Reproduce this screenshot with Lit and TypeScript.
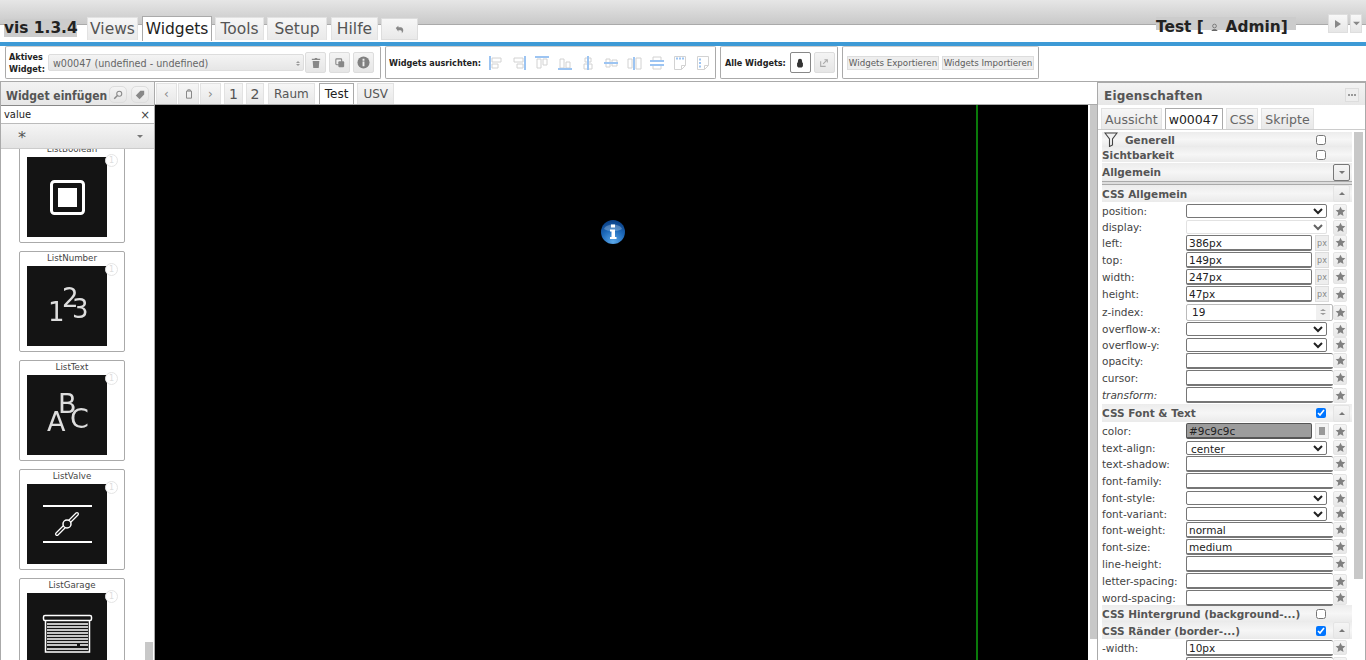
import { LitElement, css, html, svg } from 'lit'
import { customElement } from 'lit/decorators.js'

const star = html`<svg viewBox="0 0 12 12" width="11" height="11"><path fill="#808080" d="M6 .8l1.600 3.400 3.700.4-2.800 2.500.8 3.700L6 9l-3.300 1.800.8-3.700L.7 4.600l3.700-.4z"/></svg>`

type Row = { label?: string, kind: string, h: number, value?: string, checked?: boolean, arrow?: string, italic?: boolean }

const rows: Row[] = [
  { label: 'position:', kind: 'select', h: 18 },
  { label: 'display:', kind: 'disabled', h: 14 },
  { label: 'left:', kind: 'px', value: '386px', h: 17 },
  { label: 'top:', kind: 'px', value: '149px', h: 17 },
  { label: 'width:', kind: 'px', value: '247px', h: 17 },
  { label: 'height:', kind: 'px', value: '47px', h: 18 },
  { label: 'z-index:', kind: 'spin', value: '19', h: 18 },
  { label: 'overflow-x:', kind: 'select', h: 16 },
  { label: 'overflow-y:', kind: 'select', h: 15 },
  { label: 'opacity:', kind: 'input', h: 17 },
  { label: 'cursor:', kind: 'input', h: 17 },
  { label: 'transform:', kind: 'input', h: 18, italic: true },
  { label: 'CSS Font & Text', kind: 'head', h: 18, checked: true, arrow: 'up' },
  { label: 'color:', kind: 'color', value: '#9c9c9c', h: 18 },
  { label: 'text-align:', kind: 'select', value: 'center', h: 15 },
  { label: 'text-shadow:', kind: 'input', h: 17 },
  { label: 'font-family:', kind: 'input', h: 18 },
  { label: 'font-style:', kind: 'select', h: 16 },
  { label: 'font-variant:', kind: 'select', h: 15 },
  { label: 'font-weight:', kind: 'input', value: 'normal', h: 17 },
  { label: 'font-size:', kind: 'input', value: 'medium', h: 17 },
  { label: 'line-height:', kind: 'input', h: 17 },
  { label: 'letter-spacing:', kind: 'input', h: 18 },
  { label: 'word-spacing:', kind: 'input', h: 15 },
  { label: 'CSS Hintergrund (background-...)', kind: 'head', h: 17, checked: false },
  { label: 'CSS Ränder (border-...)', kind: 'head', h: 17, checked: true, arrow: 'up' },
  { label: '-width:', kind: 'input', value: '10px', h: 17 },
  { label: '', kind: 'input', h: 17 },
]

const note = 'M2.500 1.500h11v9l-4 4h-7zM13.500 10.500h-4v4'

const alignIcons = [
  ['M2 1v14', 'M4 3h9v4H4zM4 9h6v4H4z'],
  ['M14 1v14', 'M3 3h9v4H3zM6 9h6v4H6z'],
  ['M1 2h14', 'M3 4h4v9H3zM9 4h4v6H9z'],
  ['M1 14h14', 'M3 4h4v9H3zM9 7h4v6H9z'],
  ['M8 1v14', 'M5 3h6v4H5zM4 9h8v5H4z'],
  ['M1 8h14', 'M3 4h4v8H3zM9 5h5v6H9z'],
  ['M8 2v13', 'M2 4h4v9H2zM10 3h5v11h-5z'],
  ['M1 6h14M1 10h14', 'M4 2h8v4H4zM4 10h8v4H4z'],
  ['M4 3.500h2M7 3.500h2M10 3.500h2', note],
  ['M5 3.500v2M5 7v2M5 10.500v2', note],
]

const cards = [
  { name: 'ListBoolean', art: svg`<rect x="24.500" y="24.500" width="32" height="32" rx="3" fill="none" stroke="#fff" stroke-width="3"/><rect x="31" y="31" width="19" height="19" fill="#fff"/>` },
  { name: 'ListNumber', art: svg`<g fill="#ddd" font-family="DejaVu Sans" font-size="26"><text x="21" y="55">1</text><text x="35" y="41">2</text><text x="45" y="52">3</text></g>` },
  { name: 'ListText', art: svg`<g fill="#ddd" font-family="DejaVu Sans" font-size="27"><text x="20" y="56">A</text><text x="31" y="38">B</text><text x="43" y="53">C</text></g>` },
  { name: 'ListValve', art: svg`<path stroke="#fff" stroke-width="2" d="M16 22h49M16 58h49"/><path d="M30 50l7-7M43 37l7-7" stroke="#fff" stroke-width="4" stroke-linecap="round"/><path d="M30 50l7-7M43 37l7-7" stroke="#141414" stroke-width="1.500" stroke-linecap="round"/><circle cx="40" cy="40" r="4" fill="#141414" stroke="#fff" stroke-width="1.500"/>` },
  { name: 'ListGarage', art: svg`<rect x="16.500" y="22.500" width="48" height="5" rx="1.500" fill="none" stroke="#fff" stroke-width="1.500"/><path fill="none" stroke="#fff" stroke-width="1.500" d="M18.500 27v32h44V27"/><path stroke="#fff" stroke-width="1.400" d="M20 31h41M20 34h41M20 37h41M20 40h41M20 43h41M20 46h41M20 49h41M20 56h41M20 52h30M53 52h8"/>` },
]

@customElement('app-root')
export class AppRoot extends LitElement {

  renderField(row: Row) {
    switch (row.kind) {
      case 'select':
        return html`<select class="sel"><option>${row.value ?? ''}</option></select>`
      case 'disabled':
        return html`<select class="sel" disabled><option></option></select>`
      case 'px':
        return html`<input class="inp short" .value=${row.value ?? ''}><span class="unit">px</span>`
      case 'spin':
        return html`<div class="spin"><span>${row.value}</span><i class="arrows"><b class="tri up"></b><b class="tri down"></b></i></div>`
      case 'color':
        return html`<input class="inp short swatch" .value=${row.value ?? ''}><span class="unit pick"><i></i></span>`
      default:
        return html`<input class="inp" .value=${row.value ?? ''}>`
    }
  }

  renderRow(row: Row) {
    if (row.kind === 'head') {
      return html`
        <div class="row head" style="height:${row.h}px">
          <span class="head-label">${row.label}</span>
          <input type="checkbox" class="check" .checked=${!!row.checked}>
          ${row.arrow ? html`<span class="star big"><b class="tri up"></b></span>` : html`<span class="star big none"></span>`}
        </div>`
    }
    return html`
      <div class="row" style="height:${row.h}px">
        <span class="label ${row.italic ? 'italic' : ''}">${row.label}</span>
        <div class="field">${this.renderField(row)}</div>
        <span class="star">${star}</span>
      </div>`
  }

  render() {
    return html`
      <header class="top">
        <span class="brand">vis 1.3.4</span>
        <nav class="menu">
          <a class="tab">Views</a>
          <a class="tab active">Widgets</a>
          <a class="tab">Tools</a>
          <a class="tab">Setup</a>
          <a class="tab">Hilfe</a>
          <a class="tab undo">
            <svg viewBox="0 0 12 12" width="9" height="9"><path d="M1 4l3.500-3v2h3c2.500 0 3.500 2 3.500 4s-1 3-2 4c.5-2 0-4-2-4H4.500v2z" fill="#888"/></svg>
          </a>
        </nav>
        <div class="who">
          <span class="who-text">Test [
            <svg viewBox="0 0 12 12" width="9" height="9"><circle cx="6" cy="4" r="2.500" fill="none" stroke="#666"/><path d="M2 10.500c0-3 8-3 8 0z" fill="#666"/></svg>
            Admin]</span>
        </div>
        <div class="run">
          <span class="run-btn play"><svg viewBox="0 0 8 8" width="8" height="8"><path fill="#888" d="M1 0l6 4-6 4z"/></svg></span>
          <span class="run-btn more"><svg viewBox="0 0 8 8" width="7" height="7"><path fill="#888" d="M0 2h8L4 6z"/></svg></span>
        </div>
      </header>
      <div class="rule"></div>

      <section class="tools">
        <div class="group g1">
          <span class="small-label active-label">Aktives<br>Widget:</span>
          <div class="widget-sel">w00047 (undefined - undefined)<i class="updown"><b class="tri up mini"></b><b class="tri down mini"></b></i></div>
          <span class="tool-btn">
            <svg viewBox="0 0 12 12" width="10" height="10"><path fill="#888" d="M4.500 0h3v1H11v1.500H1V1h3.500zM2 3.500h8L9.300 12H2.700z"/></svg>
          </span>
          <span class="tool-btn">
            <svg viewBox="0 0 12 12" width="10" height="10"><rect x="1" y="1" width="7" height="7" rx="1" fill="none" stroke="#888" stroke-width="1.300"/><rect x="4" y="4" width="7" height="7" rx="1" fill="#888"/></svg>
          </span>
          <span class="tool-btn">
            <svg viewBox="0 0 14 14" width="13" height="13"><circle cx="7" cy="7" r="6.500" fill="#808080"/><path fill="#eee" d="M6 3h2v2H6zM6 6h2v5H6z"/></svg>
          </span>
        </div>

        <div class="group g2">
          <span class="small-label align-label">Widgets ausrichten:</span>
          <div class="aligns">
            ${alignIcons.map(([blue, grey]) => html`
              <svg viewBox="0 0 16 16" width="16" height="16" fill="none">
                <path d=${grey} stroke="#d2d2d2"/>
                <path d=${blue} stroke="#9cc4f2" stroke-width="2"/>
              </svg>`)}
          </div>
        </div>

        <div class="group g3">
          <span class="small-label">Alle Widgets:</span>
          <span class="tool-btn lock">
            <svg viewBox="0 0 12 12" width="10" height="10"><path fill="#333" d="M3.500 5V3.500a2.500 2.500 0 0 1 5 0V5l1 1v4l-1.500 1.500H4L2.500 10V6z"/></svg>
          </span>
          <span class="tool-btn">
            <svg viewBox="0 0 12 12" width="10" height="10"><path fill="none" stroke="#aaa" stroke-width="1.300" d="M2 4v6h6M5 7l5-5M6.500 2H10v3.500"/></svg>
          </span>
        </div>

        <div class="group g4">
          <span class="text-btn">Widgets Exportieren</span>
          <span class="text-btn">Widgets Importieren</span>
        </div>
      </section>

      <main class="body">
        <aside class="left">
          <div class="left-head">
            <span class="left-title">Widget einfügen</span>
            <span class="round-btn">
              <svg viewBox="0 0 12 12" width="10" height="10"><circle cx="7.500" cy="4.500" r="3" fill="none" stroke="#888" stroke-width="1.300"/><path stroke="#888" stroke-width="1.800" d="M5 7l-3.500 3.500"/></svg>
            </span>
            <span class="round-btn">
              <svg viewBox="0 0 12 12" width="10" height="10"><path fill="#888" d="M6.500 1H11v4.500L5.500 11 1 6.500z"/></svg>
            </span>
          </div>
          <div class="filter"><span>value</span><span class="clear">×</span></div>
          <div class="set"><span class="set-star">*</span><b class="tri down"></b></div>
          <div class="list">
            <div class="cards">
              ${cards.map((c) => html`
                <div class="card">
                  <div class="card-name">${c.name}</div>
                  <svg class="art" viewBox="0 0 80 80" width="80" height="80">${c.art}</svg>
                  <span class="badge">1</span>
                </div>`)}
            </div>
            <div class="list-thumb"></div>
          </div>
        </aside>

        <section class="center">
          <nav class="views">
            <span class="view nav"><b class="chev">‹</b></span>
            <span class="view nav">
              <svg viewBox="0 0 12 12" width="10" height="10"><path fill="none" stroke="#888" stroke-width="1.200" d="M3 2.500h6V11H3zM4.500 2.500V1h3v1.500"/></svg>
            </span>
            <span class="view nav"><b class="chev">›</b></span>
            <span class="view n">1</span>
            <span class="view n">2</span>
            <span class="view raum">Raum</span>
            <span class="view active">Test</span>
            <span class="view">USV</span>
          </nav>
          <div class="stage-wrap">
            <div class="stage">
              <div class="green"></div>
              <svg class="info" viewBox="0 0 24 24" width="24" height="24">
                <defs>
                  <radialGradient id="ball" cx="50%" cy="90%" r="85%">
                    <stop offset="0" stop-color="#5ba8ea"/>
                    <stop offset=".6" stop-color="#1c68b8"/>
                    <stop offset="1" stop-color="#0c4288"/>
                  </radialGradient>
                </defs>
                <circle cx="12" cy="12" r="12" fill="url(#ball)"/>
                <path d="M3 9c2-6 16-6 18 0-5 3-13 3-18 0z" fill="#fff" opacity=".25"/>
                <path fill="#fff" d="M10 4.500h4v3h-4zM9 9.500h5v7.500h1.500v2h-6.500v-2h1.500v-5.500H9z"/>
              </svg>
            </div>
            <div class="stage-bar"></div>
          </div>
        </section>

        <aside class="right">
          <div class="right-head">
            <span class="right-title">Eigenschaften</span>
            <span class="collapse"><i></i></span>
          </div>
          <div class="right-tabs">
            <span class="rtab">Aussicht</span>
            <span class="rtab active">w00047</span>
            <span class="rtab">CSS</span>
            <span class="rtab">Skripte</span>
          </div>
          <div class="props-wrap">
            <div class="props">
              <div class="row head first">
                <svg viewBox="0 0 14 15" width="14" height="15"><path d="M1 1h12L8.500 7v6l-3 1.500V7z" fill="none" stroke="#444" stroke-width="1.100"/></svg>
                <span class="head-label generell">Generell</span>
                <input type="checkbox" class="check">
                <span class="star big none"></span>
              </div>
              <div class="row head sicht">
                <span class="head-label">Sichtbarkeit</span>
                <input type="checkbox" class="check">
                <span class="star big none"></span>
              </div>
              <div class="row head allg">
                <span class="head-label">Allgemein</span>
                <span class="star big dark"><b class="tri down"></b></span>
              </div>
              <div class="divider"></div>
              <div class="row head css-allg">
                <span class="head-label">CSS Allgemein</span>
                <span class="star big"><b class="tri up"></b></span>
              </div>
              ${rows.map((r) => this.renderRow(r))}
            </div>
            <div class="props-bar"></div>
          </div>
        </aside>
      </main>
    `
  }

  static styles = css`
    :host {
      display: block;
      height: 660px;
      width: 1366px;
      overflow: hidden;
      background: #fff;
      font-family: "DejaVu Sans", sans-serif;
      color: #333;
    }
    .tri {
      display: block;
      width: 0;
      height: 0;
      border: 3px solid transparent;
    }
    .tri.up { border-bottom: 3px solid #777; border-top-width: 0; }
    .tri.down { border-top: 3px solid #777; border-bottom-width: 0; }
    .tri.mini { border-width: 2px; border-bottom-color: #999; }
    .tri.mini.down { border-top-color: #999; border-bottom-width: 0; margin-top: 1px; }
    .tri.mini.up { border-top-width: 0; }

    .top {
      height: 42px;
      box-sizing: border-box;
      display: flex;
      align-items: flex-start;
      padding-left: 4px;
      background:
        linear-gradient(#aaa, #aaa) 0 24px / 100% 1px no-repeat,
        linear-gradient(#e6e6e6, #c9c9c9) 0 0 / 100% 24px no-repeat;
    }
    .brand {
      margin-top: 19px;
      width: 73px;
      height: 18px;
      line-height: 18px;
      font-size: 15.400px;
      font-weight: bold;
      color: #222;
      background: #ccc;
      white-space: nowrap;
    }
    .menu {
      display: flex;
      align-items: flex-start;
      gap: 3px;
      margin-left: 10px;
      margin-top: 17px;
    }
    .tab {
      height: 23px;
      line-height: 22px;
      text-align: center;
      box-sizing: border-box;
      border: 1px solid #e2e2e2;
      border-bottom: 0;
      background: linear-gradient(#f7f7f7, #e9e9e9);
      font-size: 15.500px;
      color: #555;
      white-space: nowrap;
    }
    .tab:nth-child(1) { width: 51px; }
    .tab:nth-child(2) { width: 70px; margin-left: 1px; }
    .tab:nth-child(3) { width: 49px; }
    .tab:nth-child(4) { width: 60px; }
    .tab:nth-child(5) { width: 47px; margin-left: 1px; }
    .tab.active {
      height: 25px;
      margin-top: -1px;
      line-height: 24px;
      background: #fff;
      border-color: #aaa;
      color: #222;
    }
    .tab.undo {
      width: 37px;
      height: 22px;
      margin-top: 1px;
      display: flex;
      align-items: center;
      justify-content: center;
      border: 1px solid #ddd;
    }
    .who {
      margin-left: auto;
      margin-top: 17px;
      padding-right: 9px;
      width: 140px;
      background: linear-gradient(#ccc, #ccc) 0 0 / 140px 13px no-repeat;
      height: 20px;
    }
    .who-text {
      font-size: 15.400px;
      line-height: 19px;
      font-weight: bold;
      color: #222;
      white-space: nowrap;
    }
    .who svg { margin: 0 1px; }
    .run {
      display: flex;
      gap: 2px;
      margin: 14px 4px 0 23px;
    }
    .run-btn {
      height: 19px;
      display: flex;
      align-items: center;
      justify-content: center;
      box-sizing: border-box;
      border: 1px solid #dedede;
      background: linear-gradient(#f8f8f8, #e6e6e6);
    }
    .play { width: 20px; }
    .more { width: 12px; }

    .rule {
      height: 4px;
      background: #3d9ad6;
    }

    .tools {
      height: 36px;
      box-sizing: border-box;
      padding-left: 5px;
      display: flex;
      gap: 4px;
      align-items: flex-start;
      border-bottom: 1px solid #aaa;
    }
    .group {
      height: 33px;
      box-sizing: border-box;
      border: 1px solid #aaa;
      border-top-color: #ccc;
      border-radius: 2px;
      display: flex;
      align-items: center;
    }
    .g1 { width: 376px; padding-left: 3px; }
    .g2 { width: 331px; padding-left: 3px; }
    .g3 { width: 118px; padding-left: 4px; }
    .g4 { width: 197px; padding-left: 4px; gap: 3px; }
    .small-label {
      font-family: "DejaVu Sans Condensed", "DejaVu Sans", sans-serif;
      font-size: 9px;
      font-weight: bold;
      line-height: 12px;
      color: #222;
      white-space: nowrap;
    }
    .active-label { width: 39px; flex: none; }
    .align-label { width: 99px; flex: none; }
    .widget-sel {
      width: 256px;
      height: 17px;
      box-sizing: border-box;
      border: 1px solid #ddd;
      border-radius: 2px;
      background: linear-gradient(#f4f4f4, #e6e6e6);
      display: flex;
      align-items: center;
      justify-content: space-between;
      padding: 1px 3px 0 4px;
      font-family: "DejaVu Sans Condensed", "DejaVu Sans", sans-serif;
      font-size: 10.700px;
      color: #666;
    }
    .updown { display: block; }
    .tool-btn {
      width: 21px;
      height: 21px;
      margin-left: 3px;
      box-sizing: border-box;
      border: 1px solid #ddd;
      border-radius: 2px;
      background: linear-gradient(#f4f4f4, #e6e6e6);
      display: flex;
      align-items: center;
      justify-content: center;
    }
    .g1 .widget-sel + .tool-btn { margin-left: 1px; }
    .tool-btn.lock {
      margin-left: 4px;
      background: #fff;
      border-color: #888;
    }
    .aligns {
      display: flex;
      gap: 7px;
      filter: blur(.4px);
    }
    .text-btn {
      height: 14px;
      line-height: 13px;
      width: 92px;
      text-align: center;
      box-sizing: border-box;
      border: 1px solid #ddd;
      background: #eee;
      font-size: 8.700px;
      color: #5c5c5c;
      white-space: nowrap;
    }

    .body {
      display: flex;
      height: 578px;
    }

    .left {
      width: 155px;
      flex: none;
      box-sizing: border-box;
      border-left: 1px solid #aaa;
      border-right: 1px solid #aaa;
      display: flex;
      flex-direction: column;
      overflow: hidden;
    }
    .left-head {
      height: 23px;
      flex: none;
      box-sizing: border-box;
      display: flex;
      align-items: center;
      gap: 2px;
      padding: 2px 0 0 5px;
      background: linear-gradient(#f3f3f3, #e6e6e6);
    }
    .left-title {
      font-family: "DejaVu Sans Condensed", "DejaVu Sans", sans-serif;
      font-size: 12px;
      font-weight: bold;
      color: #555;
      white-space: nowrap;
      margin-top: 3px;
    }
    .round-btn {
      width: 18px;
      height: 17px;
      margin-right: 2px;
      box-sizing: border-box;
      border: 1px solid #ddd;
      border-radius: 5px;
      background: linear-gradient(#f4f4f4, #e6e6e6);
      display: flex;
      align-items: center;
      justify-content: center;
    }
    .filter {
      height: 18px;
      flex: none;
      box-sizing: border-box;
      display: flex;
      align-items: center;
      justify-content: space-between;
      padding: 0 4px 0 3px;
      border-top: 1px solid #888;
      font-family: "DejaVu Sans Condensed", "DejaVu Sans", sans-serif;
      font-size: 11px;
      color: #222;
    }
    .clear { font-size: 13px; color: #444; }
    .set {
      height: 26px;
      flex: none;
      box-sizing: border-box;
      display: flex;
      align-items: center;
      justify-content: space-between;
      padding: 0 11px 0 17px;
      background: linear-gradient(#f5f5f5, #e3e3e3);
      border-top: 1px solid #bbb;
      border-bottom: 1px solid #ccc;
    }
    .set-star { font-size: 16px; line-height: 16px; margin-top: 3px; color: #555; }
    .list {
      flex: 1;
      min-height: 0;
      position: relative;
      overflow: hidden;
    }
    .cards {
      margin-top: -7px;
      margin-left: 18px;
      display: flex;
      flex-direction: column;
      gap: 8px;
    }
    .card {
      position: relative;
      width: 106px;
      height: 101px;
      flex: none;
      box-sizing: border-box;
      border: 1px solid #aaa;
      border-radius: 2px;
      text-align: center;
    }
    .card-name {
      height: 14px;
      line-height: 13px;
      font-size: 8.700px;
      color: #444;
    }
    .art {
      display: block;
      margin-left: 7px;
      background: #141414;
    }
    .art > * { filter: blur(.4px); }
    .badge {
      position: absolute;
      right: 6px;
      top: 11px;
      width: 13px;
      height: 13px;
      box-sizing: border-box;
      border: 1px solid #e5e5e5;
      border-radius: 50%;
      background: #fff;
      font-size: 8px;
      line-height: 11px;
      color: #ddd;
    }
    .list-thumb {
      position: absolute;
      right: 1px;
      bottom: 0;
      width: 8px;
      height: 18px;
      background: #c8c8c8;
    }

    .center {
      width: 942px;
      flex: none;
      display: flex;
      flex-direction: column;
      min-height: 0;
    }
    .views {
      height: 22px;
      flex: none;
      box-sizing: border-box;
      display: flex;
      align-items: flex-end;
      padding-left: 1px;
      gap: 3px;
    }
    .view {
      height: 21px;
      box-sizing: border-box;
      line-height: 20px;
      padding: 0 5px;
      border: 1px solid #e2e2e2;
      border-bottom: 0;
      background: linear-gradient(#f6f6f6, #e8e8e8);
      font-size: 12px;
      color: #555;
    }
    .view.nav {
      width: 21px;
      margin-right: -2px;
      padding: 0;
      display: flex;
      align-items: center;
      justify-content: center;
    }
    .view.nav:nth-child(3) { margin-right: 0; }
    .view.n { width: 19px; padding: 0; text-align: center; font-size: 14px; }
    .view.n + .view.n { width: 18px; }
    .view.raum { margin-left: 1px; }
    .view.active {
      margin-left: 1px;
      background: #fff;
      border-color: #aaa;
      color: #222;
    }
    .chev { font-weight: normal; color: #888; font-size: 12px; }
    .stage-wrap {
      flex: 1;
      min-height: 0;
      display: flex;
      border-top: 1px solid #aaa;
    }
    .stage {
      position: relative;
      width: 933px;
      flex: none;
      background: #000;
    }
    .green {
      position: absolute;
      left: 821px;
      top: 0;
      bottom: 0;
      width: 2px;
      background: #0a7a0a;
    }
    .info {
      position: absolute;
      left: 446px;
      top: 115px;
    }
    .stage-bar {
      width: 7px;
      height: 534px;
      margin-left: 2px;
      background: #c8c8c8;
    }

    .right {
      flex: 1;
      min-width: 0;
      box-sizing: border-box;
      border-left: 1px solid #aaa;
      border-right: 1px solid #aaa;
      border-top: 1px solid #aaa;
      display: flex;
      flex-direction: column;
      overflow: hidden;
    }
    .right-head {
      height: 22px;
      flex: none;
      display: flex;
      align-items: center;
      justify-content: space-between;
      padding: 2px 6px 0 6px;
      box-sizing: border-box;
      background: linear-gradient(#f3f3f3, #e7e7e7);
    }
    .right-title {
      font-size: 12px;
      font-weight: bold;
      letter-spacing: .2px;
      color: #555;
      margin-top: 2px;
    }
    .collapse {
      width: 14px;
      height: 14px;
      box-sizing: border-box;
      border: 1px solid #ddd;
      background: #eee;
      display: flex;
      align-items: center;
      justify-content: center;
    }
    .collapse i { width: 8px; border-top: 2px dotted #999; }
    .right-tabs {
      height: 25px;
      flex: none;
      box-sizing: border-box;
      display: flex;
      gap: 3px;
      align-items: flex-end;
      padding-left: 3px;
      border-bottom: 1px solid #ccc;
    }
    .rtab {
      height: 21px;
      line-height: 21px;
      box-sizing: border-box;
      border: 1px solid #e2e2e2;
      border-bottom: 0;
      padding: 0 3px;
      background: linear-gradient(#f6f6f6, #e8e8e8);
      font-size: 12.500px;
      color: #666;
    }
    .rtab.active {
      background: #fff;
      border-color: #aaa;
      color: #222;
    }
    .props-wrap {
      flex: 1;
      min-height: 0;
      display: flex;
      padding: 2px 0 0 4px;
      overflow: hidden;
    }
    .props {
      width: 250px;
      flex: none;
    }
    .props-bar {
      width: 9px;
      height: 447px;
      margin-left: 2px;
      background: #c8c8c8;
    }
    .row {
      display: flex;
      align-items: center;
      box-sizing: border-box;
    }
    .row.head {
      background: linear-gradient(#ececec, #f6f6f6 50%, #eaeaea);
    }
    .row.first { height: 15px; padding-left: 2px; }
    .generell { margin-left: 7px; }
    .sicht { height: 15px; }
    .allg { height: 18px; margin-top: 1px; }
    .css-allg { height: 17px; }
    .divider {
      height: 4px;
      box-sizing: border-box;
      border-top: 1px solid #aaa;
      border-bottom: 1px solid #aaa;
      background: #ddd;
    }
    .head-label {
      flex: 1;
      font-size: 10.500px;
      font-weight: bold;
      color: #555;
      white-space: nowrap;
    }
    .check {
      margin: 0 7px 0 0;
      width: 10px;
      height: 10px;
    }
    .label {
      width: 84px;
      flex: none;
      font-size: 10.500px;
      color: #444;
      white-space: nowrap;
    }
    .italic { font-style: italic; }
    .field {
      width: 147px;
      flex: none;
      display: flex;
      align-items: center;
    }
    .sel {
      width: 141px;
      height: 14px;
      box-sizing: border-box;
      padding: 0;
      font-family: inherit;
      font-size: 10.500px;
      line-height: 12px;
      color: #222;
      background: #fff;
      border-radius: 2px;
    }
    .inp {
      width: 147px;
      height: 16px;
      box-sizing: border-box;
      margin: 0;
      padding: 1px 2px 0;
      border: 1px solid #767676;
      border-bottom-width: 2px;
      border-right-width: 0;
      border-radius: 2px;
      outline: 0;
      font-family: inherit;
      font-size: 10.500px;
      color: #222;
      background: #fff;
    }
    .inp.short {
      width: 126px;
      border-right-width: 1px;
    }
    .inp.swatch {
      background: #9c9c9c;
      border-color: #555;
    }
    .unit {
      width: 14px;
      height: 16px;
      line-height: 16px;
      margin-left: 3px;
      box-sizing: border-box;
      border: 1px solid #ddd;
      background: #eee;
      font-size: 8px;
      color: #888;
      text-align: center;
      flex: none;
    }
    .unit.pick {
      display: flex;
      align-items: center;
      justify-content: center;
      background: #f3f3f3;
    }
    .unit.pick i {
      width: 6px;
      height: 8px;
      background: #999;
    }
    .spin {
      width: 147px;
      height: 17px;
      box-sizing: border-box;
      border: 1px solid #bbb;
      border-radius: 2px;
      display: flex;
      align-items: center;
      justify-content: space-between;
      padding-left: 5px;
      font-size: 10.500px;
      color: #222;
    }
    .arrows {
      display: flex;
      flex-direction: column;
      align-items: center;
      justify-content: center;
      gap: 2px;
      width: 14px;
      height: 100%;
      background: #f0f0f0;
      margin-right: 2px;
    }
    .arrows .tri { border-width: 2px 3px; }
    .arrows .tri.up { border-top-width: 0; border-bottom-color: #999; }
    .arrows .tri.down { border-bottom-width: 0; border-top-color: #999; }
    .star {
      width: 14px;
      height: 15px;
      flex: none;
      box-sizing: border-box;
      border: 1px solid #e4e4e4;
      border-radius: 2px;
      background: linear-gradient(#f5f5f5, #e8e8e8);
      display: flex;
      align-items: center;
      justify-content: center;
    }
    .star.big { width: 17px; height: 17px; margin-right: 2px; }
    .star.none { visibility: hidden; }
    .star.dark { border-color: #777; }
  `
}
